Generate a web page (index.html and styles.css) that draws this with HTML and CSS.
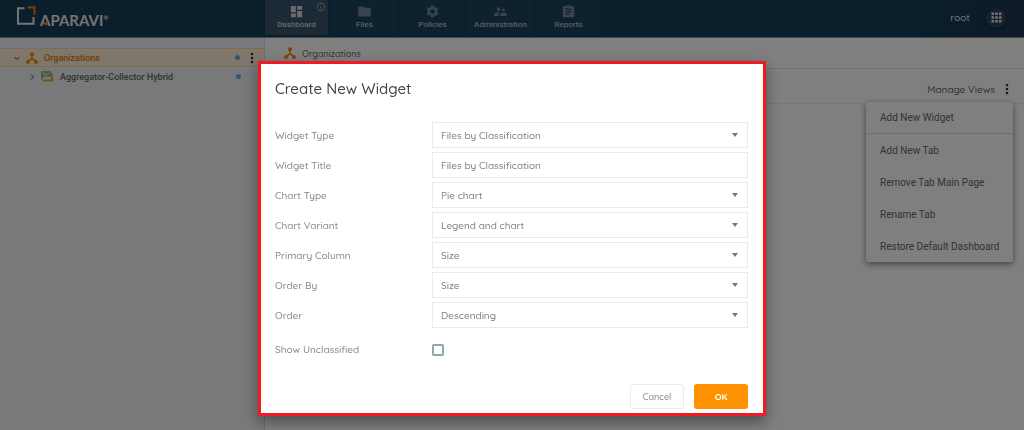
FILE: index.html
```html
<!DOCTYPE html>
<html lang="en">
<head>
  <meta charset="UTF-8" />
  <meta name="viewport" content="width=device-width, initial-scale=1.0"/>
  <title>Aparavi - Dashboard</title>
  <link rel="stylesheet" href="styles.css">
</head>
<body>

  <!-- Shared icons -->
  <svg class="sprite" aria-hidden="true">
    <symbol id="icon-org" viewBox="0 0 24 24">
      <circle cx="12" cy="4.500" r="4"/>
      <circle cx="4" cy="20" r="3.800"/>
      <circle cx="20" cy="20" r="3.800"/>
      <path d="M10.500 6h3v6l7 6.600-2 2.200L12 15l-6.500 5.800-2-2.200 7-6.600z"/>
    </symbol>
    <symbol id="icon-dots" viewBox="0 0 4 12">
      <circle cx="2" cy="2" r="1.300"/>
      <circle cx="2" cy="6" r="1.300"/>
      <circle cx="2" cy="10" r="1.300"/>
    </symbol>
  </svg>

  <header class="topbar">
    <a class="logo" href="#" aria-label="Aparavi">
      <svg class="logo-mark" viewBox="0 0 20 20" aria-hidden="true">
        <path d="M8.500 2.200H2v15.600h15.500V11" fill="none" stroke="#e8e8e8" stroke-width="2"/>
        <path d="M11.500 1.400h7V9" fill="none" stroke="#e07820" stroke-width="2.200"/>
      </svg>
      <span class="logo-text">APARAVI<sup>®</sup></span>
    </a>

    <nav class="tabs">
      <a class="tab active" href="#">
        <svg viewBox="0 0 24 24"><path d="M3 13h8V3H3v10zm0 8h8v-6H3v6zm10 0h8V11h-8v10zm0-18v6h8V3h-8z"/></svg>
        Dashboard
        <svg class="tab-info" viewBox="0 0 24 24"><path d="M11 7h2v2h-2zm0 4h2v6h-2zm1-9a10 10 0 1 0 0 20 10 10 0 0 0 0-20zm0 18a8 8 0 1 1 0-16 8 8 0 0 1 0 16z"/></svg>
      </a>
      <a class="tab" href="#">
        <svg viewBox="0 0 24 24"><path d="M10 4H4c-1.100 0-2 .9-2 2v12c0 1.100.9 2 2 2h16c1.100 0 2-.9 2-2V8c0-1.100-.9-2-2-2h-8l-2-2z"/></svg>
        Files
      </a>
      <a class="tab" href="#">
        <svg viewBox="0 0 24 24"><path d="M19.140 12.940c.04-.3.060-.61.060-.94 0-.32-.02-.64-.07-.94l2.030-1.580a.49.49 0 0 0 .12-.61l-1.920-3.320a.488.488 0 0 0-.59-.22l-2.390.96c-.5-.38-1.030-.7-1.620-.94l-.36-2.540a.484.484 0 0 0-.48-.41h-3.840c-.24 0-.43.17-.47.41l-.36 2.540c-.59.24-1.130.57-1.620.94l-2.390-.96c-.22-.08-.47 0-.59.22L2.740 8.870c-.12.21-.08.47.12.61l2.030 1.580c-.05.3-.09.63-.09.94s.02.640.070.940l-2.030 1.580a.49.49 0 0 0-.12.610l1.920 3.320c.12.220.370.290.590.220l2.390-.96c.5.380 1.030.7 1.620.940l.36 2.540c.05.240.240.410.480.410h3.840c.24 0 .44-.17.470-.41l.36-2.540c.59-.24 1.130-.56 1.620-.94l2.390.96c.22.080.470 0 .59-.22l1.920-3.320c.12-.22.070-.47-.12-.61l-2.010-1.580zM12 15.600A3.600 3.600 0 1 1 12 8.400a3.600 3.600 0 0 1 0 7.200z"/></svg>
        Policies
      </a>
      <a class="tab" href="#">
        <svg viewBox="0 0 24 24"><path d="M16.500 12a2.500 2.500 0 1 0 0-5 2.500 2.500 0 0 0 0 5zM9 11a3 3 0 1 0 0-6 3 3 0 0 0 0 6zm7.500 3c-1.830 0-5.500.92-5.500 2.750V19h11v-2.250c0-1.830-3.670-2.750-5.500-2.750zM9 13c-2.330 0-7 1.170-7 3.500V19h7v-2.250c0-.85.33-2.340 2.370-3.470C10.500 13.100 9.660 13 9 13z"/></svg>
        Administration
      </a>
      <a class="tab" href="#">
        <svg viewBox="0 0 24 24"><path d="M19 3h-4.180a3 3 0 0 0-5.640 0H5c-1.100 0-2 .9-2 2v14c0 1.100.9 2 2 2h14c1.100 0 2-.9 2-2V5c0-1.100-.9-2-2-2zm-7 0a1 1 0 1 1 0 2 1 1 0 0 1 0-2zm2 14H7v-2h7v2zm3-4H7v-2h10v2zm0-4H7V7h10v2z"/></svg>
        Reports
      </a>
    </nav>

    <div class="user">
      <span>root</span>
      <button class="apps" type="button" aria-label="Apps">
        <svg viewBox="0 0 24 24"><path d="M4 8h4V4H4v4zm6 12h4v-4h-4v4zm-6 0h4v-4H4v4zm0-6h4v-4H4v4zm6 0h4v-4h-4v4zm6-10v4h4V4h-4zm-6 4h4V4h-4v4zm6 6h4v-4h-4v4zm0 6h4v-4h-4v4z"/></svg>
      </button>
    </div>
  </header>

  <div class="page">
    <aside class="sidebar">
      <div class="tree-row selected">
        <svg class="chevron" viewBox="0 0 8 8"><path d="M1.500 3L4 5.500 6.500 3"/></svg>
        <svg class="org-icon"><use href="#icon-org"/></svg>
        <a href="#">Organizations</a>
        <span class="status"></span>
        <button class="dots" type="button" aria-label="More"><svg><use href="#icon-dots"/></svg></button>
      </div>
      <div class="tree-row child">
        <svg class="chevron" viewBox="0 0 8 8"><path d="M3 1.500L5.500 4 3 6.500"/></svg>
        <svg class="node-icon" viewBox="0 0 12 11">
          <path d="M0 0h10v6H4L0 9z" fill="#8fc486"/>
          <path d="M2 2.500h3M2 7l6-5" stroke="#eef2f5" fill="none"/>
          <path d="M11 2v7.500H2" stroke="#f5a030" stroke-width="2" fill="none"/>
        </svg>
        <a href="#">Aggregator-Collector Hybrid</a>
        <span class="status"></span>
      </div>
    </aside>

    <main class="content">
      <div class="breadcrumb">
        <svg class="org-icon"><use href="#icon-org"/></svg>
        <span>Organizations</span>
      </div>
      <div class="views">
        <span>Manage Views</span>
        <button class="dots" type="button" aria-label="Manage views menu"><svg><use href="#icon-dots"/></svg></button>
        <div class="menu">
          <button type="button">Add New Widget</button>
          <button type="button">Add New Tab</button>
          <button type="button">Remove Tab Main Page</button>
          <button type="button">Rename Tab</button>
          <button type="button">Restore Default Dashboard</button>
        </div>
      </div>
    </main>
  </div>

  <div class="overlay">
    <form class="dialog" role="dialog" aria-labelledby="dialog-title">
      <h2 id="dialog-title">Create New Widget</h2>

      <div class="fields">
        <label for="widget-type">Widget Type</label>
        <div class="select"><select id="widget-type"><option>Files by Classification</option></select></div>

        <label for="widget-title">Widget Title</label>
        <input type="text" id="widget-title" value="Files by Classification">

        <label for="chart-type">Chart Type</label>
        <div class="select"><select id="chart-type"><option>Pie chart</option></select></div>

        <label for="chart-variant">Chart Variant</label>
        <div class="select"><select id="chart-variant"><option>Legend and chart</option></select></div>

        <label for="primary-column">Primary Column</label>
        <div class="select"><select id="primary-column"><option>Size</option></select></div>

        <label for="order-by">Order By</label>
        <div class="select"><select id="order-by"><option>Size</option></select></div>

        <label for="order">Order</label>
        <div class="select"><select id="order"><option>Descending</option></select></div>

        <label class="check-label" for="show-unclassified">Show Unclassified</label>
        <input type="checkbox" id="show-unclassified">
      </div>

      <div class="actions">
        <button class="cancel" type="button">Cancel</button>
        <button class="ok" type="submit">OK</button>
      </div>
    </form>
  </div>

</body>
</html>
```

FILE: styles.css
```css
* {
  box-sizing: border-box;
}

body {
  display: flex;
  flex-direction: column;
  min-height: 100vh;
  margin: 0;
  font-family: Quicksand, Lato, sans-serif;
  font-size: 10px;
  font-weight: 500;
  color: #666;
  background: #fff;
}

a {
  color: inherit;
  text-decoration: none;
}

button {
  padding: 0;
  border: none;
  background: none;
  font: inherit;
  color: inherit;
  cursor: pointer;
}

.sprite {
  display: none;
}

/* Top bar */
.topbar {
  display: flex;
  align-items: center;
  height: 38px;
  background: linear-gradient(90deg, #163c56 90%, #1e3550);
  border-bottom: 1px solid #8290a0;
  color: #e8e8e8;
}

.logo {
  display: flex;
  align-items: center;
  gap: 4px;
  width: 265px;
  padding-left: 16px;
}

.logo-mark {
  width: 20px;
  height: 20px;
  margin-bottom: 5px;
}

.logo-text {
  position: relative;
  margin-top: 2px;
  font-family: Lato, sans-serif;
  font-size: 15px;
  font-weight: 700;
  line-height: 20px;
}

/* orange stroke inside the first letter */
.logo-text::before {
  content: "";
  position: absolute;
  left: 4px;
  bottom: 5px;
  width: 4px;
  height: 3px;
  background: #e07820;
}

.logo-text sup {
  font-size: 6px;
  line-height: 6px;
  vertical-align: 6px;
}

.tabs {
  display: flex;
  align-self: flex-start;
  gap: 5px;
}

.tab {
  position: relative;
  display: flex;
  flex-direction: column;
  align-items: center;
  gap: 1px;
  width: 63px;
  height: 35px;
  padding-top: 4px;
  background: #1c425f;
  color: #b4bec6;
  font-family: Roboto, sans-serif;
  font-size: 8px;
  font-weight: 500;
  line-height: 10px;
}

.tab svg {
  width: 15px;
  height: 15px;
  fill: #75899a;
}

.tab.active {
  background: #38546a;
  color: #d0d4d8;
}

.tab.active svg {
  fill: #d0d4d8;
}

.tab .tab-info {
  position: absolute;
  top: 2px;
  right: 2px;
  width: 10px;
  height: 10px;
}

.tab.active .tab-info {
  fill: #a0acb6;
}

.user {
  display: flex;
  align-items: center;
  gap: 16px;
  margin-left: auto;
  padding-right: 18px;
}

.user span {
  margin-bottom: 2px;
}

.apps {
  display: grid;
  place-items: center;
  width: 20px;
  height: 20px;
  margin-bottom: 2px;
  border-radius: 50%;
  background: #30445c;
  box-shadow: 0 1px 3px rgba(0, 0, 0, 0.4);
}

.apps svg {
  width: 15px;
  height: 15px;
  fill: #e8e8e8;
}

/* Layout */
.page {
  display: flex;
  flex: 1;
}

.sidebar {
  width: 265px;
  padding-top: 10px;
  background: #eef2f5;
  border-right: 1px solid #d8dce0;
}

.content {
  flex: 1;
}

/* Tree */
.tree-row {
  display: flex;
  align-items: center;
  height: 19px;
  padding: 0 23px 0 28px;
  font-family: Roboto, sans-serif;
  font-size: 9px;
}

.tree-row.selected {
  padding: 0 10px 0 13px;
  background: #ffeed6;
  border: 1px solid #ffd898;
  border-width: 1px 0;
  color: #e07800;
}

.chevron {
  width: 8px;
  height: 8px;
  margin-right: 5px;
  fill: none;
  stroke: #444;
}

.org-icon {
  width: 12px;
  height: 12px;
  margin-right: 6px;
  fill: #f08a00;
}

.node-icon {
  width: 12px;
  height: 11px;
  margin-right: 7px;
}

.status {
  width: 5px;
  height: 5px;
  margin-left: auto;
  border-radius: 50%;
  background: #68a8e0;
}

.dots {
  width: 4px;
  height: 12px;
  margin-left: 10px;
  line-height: 0;
}

.dots svg {
  width: 4px;
  height: 12px;
  fill: #333;
}

/* Content */
.breadcrumb {
  display: flex;
  align-items: center;
  height: 31px;
  padding-left: 19px;
  border-bottom: 1px solid #e4e4e4;
  font-size: 9px;
}

.views {
  position: relative;
  display: flex;
  align-items: center;
  justify-content: flex-end;
  height: 35px;
  padding: 6px 15px 0 0;
  border-bottom: 1px solid #eee;
}

.menu {
  position: absolute;
  top: 33px;
  right: 11px;
  display: flex;
  flex-direction: column;
  width: 147px;
  border-radius: 2px;
  background: #fff;
  box-shadow: 0 2px 6px rgba(0, 0, 0, 0.5);
  font-family: Roboto, sans-serif;
  font-weight: 400;
}

.menu button {
  height: 32px;
  padding-left: 14px;
  text-align: left;
}

.menu button:first-child {
  border-bottom: 1px solid #ddd;
}

/* Dialog */
.overlay {
  position: fixed;
  inset: 0;
  display: flex;
  justify-content: center;
  align-items: flex-start;
  padding-top: 61px;
  background: rgba(0, 0, 0, 0.5);
}

.dialog {
  width: 508px;
  padding: 15px 15px 4px 14px;
  border: 3px solid #ed1c24;
  background: #fff;
  box-shadow: 0 6px 14px rgba(0, 0, 0, 0.4);
  color: #888;
}

.dialog h2 {
  margin: 0 0 23px;
  font-size: 15px;
  font-weight: 500;
  line-height: 20px;
  color: #444;
}

.fields {
  display: grid;
  grid-template-columns: 157px 1fr;
  row-gap: 4px;
  align-items: center;
}

.fields input[type="text"],
.fields select {
  display: block;
  width: 100%;
  height: 26px;
  padding: 0 8px;
  border: 1px solid #e8ecee;
  border-radius: 0;
  appearance: none;
  background: #fff;
  font: inherit;
  color: #808080;
}

.select {
  position: relative;
}

.select::after {
  content: "";
  position: absolute;
  top: 11px;
  right: 10px;
  border: 3px solid transparent;
  border-top: 4px solid #777;
  border-bottom: none;
  pointer-events: none;
}

.check-label {
  line-height: 35px;
}

.fields input[type="checkbox"] {
  width: 12px;
  height: 12px;
  margin: 0;
  border: 2px solid #90a4ae;
  border-radius: 2px;
  appearance: none;
}

.actions {
  display: flex;
  justify-content: flex-end;
  gap: 10px;
  margin-top: 17px;
}

.actions button {
  width: 54px;
  height: 25px;
  border-radius: 3px;
  font-size: 9px;
}

.actions .cancel {
  border: 1px solid #e8ecee;
}

.actions .ok {
  background: #ff9100;
  color: #fff;
  font-weight: 700;
}
```
